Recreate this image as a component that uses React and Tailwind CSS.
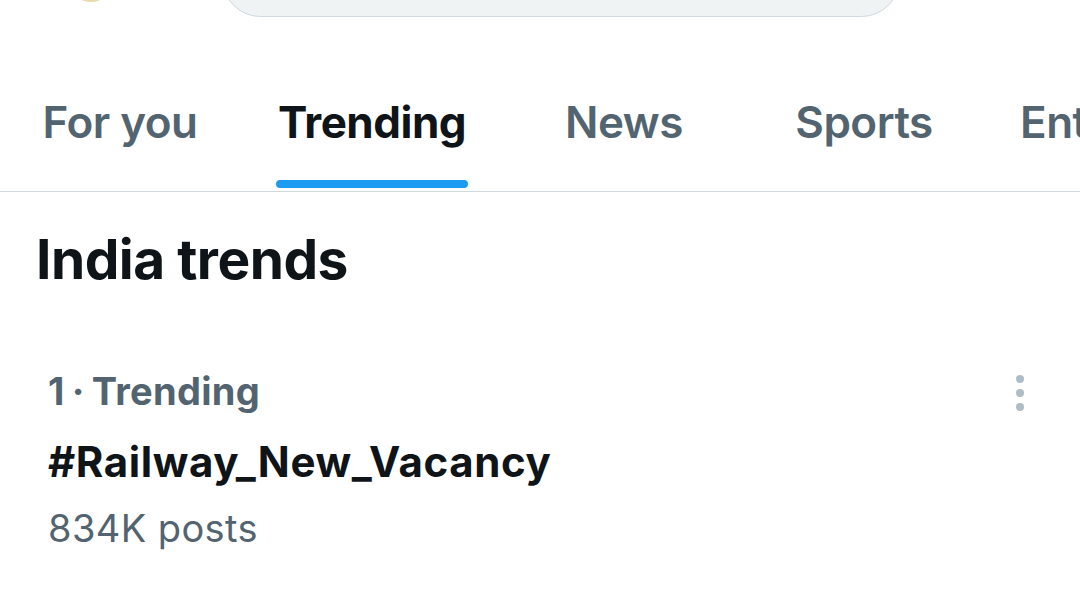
import React from 'react'

const TABS = [
  { label: 'For you', w: 'w-[240px]' },
  { label: 'Trending', w: 'w-[264px]', active: true },
  { label: 'News', w: 'w-[240px]' },
  { label: 'Sports', w: 'w-[240px]' },
  { label: 'Entertainment', w: 'w-[320px]', left: true },
]

const SANS = "font-['Inter','Roboto','Noto_Sans',sans-serif]"

function Tab({ tab }) {
  return (
    <div className={`${tab.w} shrink-0 flex flex-col`}>
      <div className={`h-[106px] flex items-end ${tab.left ? 'pl-[36px]' : 'justify-center'}`}>
        <span
          className={`
            text-[44px] leading-none tracking-[-0.5px]
            ${tab.active ? 'font-bold text-[#0f1419]' : 'font-semibold text-[#536471]'}
          `}
        >
          {tab.label}
        </span>
      </div>
      <div className={`mt-[36px] mb-[3px] h-[8px] w-[192px] self-center rounded-full ${tab.active ? 'bg-[#1d9bf0]' : 'bg-transparent'}`} />
    </div>
  )
}

export default function App() {
  return (
    <div className={`w-[1080px] h-[608px] overflow-hidden bg-white ${SANS}`}>
      {/* top bar remnants */}
      <div className="flex items-start h-[38px]">
        <div className="ml-[70px] mt-[-40px] w-[42px] h-[42px] rounded-full bg-[#e9dca8]" />
        <div className="ml-[110px] mt-[-60px] w-[678px] h-[77px] rounded-full bg-[#eff3f4] border border-[#cfd9de]" />
      </div>

      {/* Tabs */}
      <div className="flex overflow-hidden border-b border-[#cfd9de]">
        {TABS.map(t => <Tab key={t.label} tab={t} />)}
      </div>

      {/* Heading */}
      <h1 className="font-bold text-[55px] leading-none tracking-[-0.5px] text-[#0f1419] pl-[36px] pt-[40px]">
        India trends
      </h1>

      {/* Trend item */}
      <div className="flex justify-between pl-[48px] pr-[56px] pt-[85px]">
        <div className="flex flex-col">
          <span className="font-bold text-[38px] leading-none text-[#536471] tracking-[0.3px]">
            1<span className="mx-[7px]">·</span>Trending
          </span>
          <span className="font-bold text-[42px] leading-none text-[#0f1419] tracking-[0.6px] mt-[31px]">
            #Railway_New_Vacancy
          </span>
          <span className="text-[38px] leading-none text-[#536471] tracking-[0.4px] mt-[26px]">
            834K posts
          </span>
        </div>
        <div className="flex flex-col gap-[6px] pt-[3px]">
          <span className="w-[8px] h-[8px] rounded-full bg-[#aebcc6]" />
          <span className="w-[8px] h-[8px] rounded-full bg-[#aebcc6]" />
          <span className="w-[8px] h-[8px] rounded-full bg-[#aebcc6]" />
        </div>
      </div>
    </div>
  )
}
